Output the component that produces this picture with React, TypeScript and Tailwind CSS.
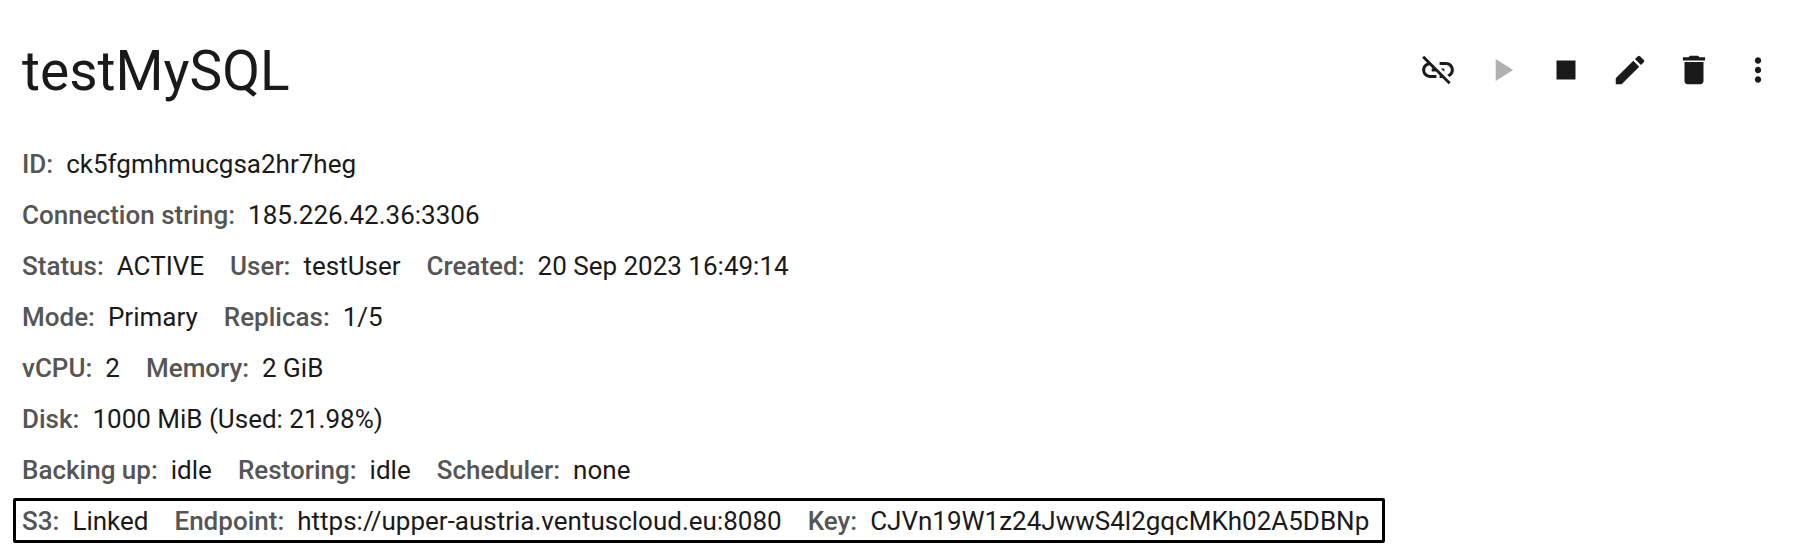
import type { ReactNode } from "react";
import {
  MdDelete,
  MdEdit,
  MdLinkOff,
  MdMoreVert,
  MdPlayArrow,
  MdStop,
} from "react-icons/md";

type Pair = [label: string, value: string];

const rows: Pair[][] = [
  [["ID", "ck5fgmhmucgsa2hr7heg"]],
  [["Connection string", "185.226.42.36:3306"]],
  [["Status", "ACTIVE"], ["User", "testUser"], ["Created", "20 Sep 2023 16:49:14"]],
  [["Mode", "Primary"], ["Replicas", "1/5"]],
  [["vCPU", "2"], ["Memory", "2 GiB"]],
  [["Disk", "1000 MiB (Used: 21.98%)"]],
  [["Backing up", "idle"], ["Restoring", "idle"], ["Scheduler", "none"]],
];

const storage: Pair[] = [
  ["S3", "Linked"],
  ["Endpoint", "https://upper-austria.ventuscloud.eu:8080"],
  ["Key", "CJVn19W1z24JwwS4l2gqcMKh02A5DBNp"],
];

function Row({ pairs }: { pairs: Pair[] }) {
  return (
    <dl className="flex flex-wrap gap-x-[26px]">
      {pairs.map(([label, value]) => (
        <div key={label} className="flex gap-[13px]">
          <dt className="font-medium text-[#555555]">{label}:</dt>
          <dd>{value}</dd>
        </div>
      ))}
    </dl>
  );
}

function Action({ label, disabled, children }: { label: string; disabled?: boolean; children: ReactNode }) {
  return (
    <button type="button" aria-label={label} disabled={disabled} className="p-[13px] text-[38px] disabled:text-[#b0b0b0]">
      {children}
    </button>
  );
}

export default function App() {
  return (
    <main className="min-h-screen bg-white pt-[38px] pr-4 pb-4 pl-[22px] font-[Roboto,sans-serif] text-[26px] leading-[51px] text-[#1a1a1a]">
      <header className="flex items-start justify-between">
        <h1 className="text-[55px] leading-[66px]">testMySQL</h1>
        <div className="flex">
          <Action label="Unlink S3"><MdLinkOff /></Action>
          <Action label="Start" disabled><MdPlayArrow /></Action>
          <Action label="Stop"><MdStop /></Action>
          <Action label="Edit"><MdEdit /></Action>
          <Action label="Delete"><MdDelete /></Action>
          <Action label="More options"><MdMoreVert /></Action>
        </div>
      </header>
      <section className="mt-[35px]">
        {rows.map((pairs) => (
          <Row key={pairs[0][0]} pairs={pairs} />
        ))}
        <div className="mt-[2px] -ml-[9px] w-fit rounded-xs border-[3px] border-black pt-px pr-[13px] pl-[6px] leading-[38px]">
          <Row pairs={storage} />
        </div>
      </section>
    </main>
  );
}
